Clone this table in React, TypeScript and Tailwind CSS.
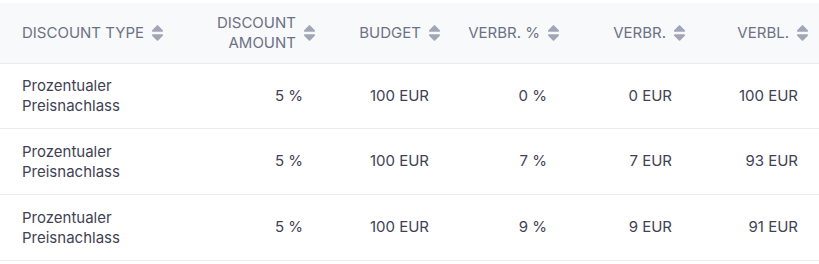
import { FaSort } from 'react-icons/fa'

const rows = [
  { amount: '5 %', budget: '100 EUR', pct: '0 %', used: '0 EUR', left: '100 EUR', h: 'h-[65px]' },
  { amount: '5 %', budget: '100 EUR', pct: '7 %', used: '7 EUR', left: '93 EUR', h: 'h-[66px]' },
  { amount: '5 %', budget: '100 EUR', pct: '9 %', used: '9 EUR', left: '91 EUR', h: 'h-[66px]' },
]

const cols = 'grid grid-cols-[200px_126px_125px_119px_126px_123px]'

function Head({ children, left }: { children: React.ReactNode; left?: boolean }) {
  return (
    <div
      className={`flex items-center gap-[7px] ${left ? 'justify-start pl-[22px]' : 'justify-end pr-[10px]'}`}
    >
      <span className="text-right leading-5">{children}</span>
      <FaSort className="h-[20px] w-[13px] shrink-0 text-[#a1a5b7]" />
    </div>
  )
}

export default function App() {
  return (
    <div className="h-[264px] w-[819px] overflow-hidden bg-white pt-[3px] font-['Inter',sans-serif] text-[15px]">
      <div className={`${cols} h-[61px] border-b border-[#e9ebef] bg-[#f8f9fb] uppercase text-[#6c7285]`}>
        <Head left>Discount type</Head>
        <Head>
          Discount
          <br />
          amount
        </Head>
        <Head>Budget</Head>
        <Head>Verbr. %</Head>
        <Head>Verbr.</Head>
        <Head>Verbl.</Head>
      </div>
      {rows.map((r, i) => (
        <div key={i} className={`${cols} ${r.h} border-b border-[#e9ebef] text-[#3f4254]`}>
          <div className="flex items-center pl-[22px] leading-5">
            Prozentualer
            <br />
            Preisnachlass
          </div>
          <div className="flex items-center justify-end pr-[23px]">{r.amount}</div>
          <div className="flex items-center justify-end pr-[22px]">{r.budget}</div>
          <div className="flex items-center justify-end pr-[23px]">{r.pct}</div>
          <div className="flex items-center justify-end pr-[24px]">{r.used}</div>
          <div className="flex items-center justify-end pr-[21px]">{r.left}</div>
        </div>
      ))}
    </div>
  )
}
